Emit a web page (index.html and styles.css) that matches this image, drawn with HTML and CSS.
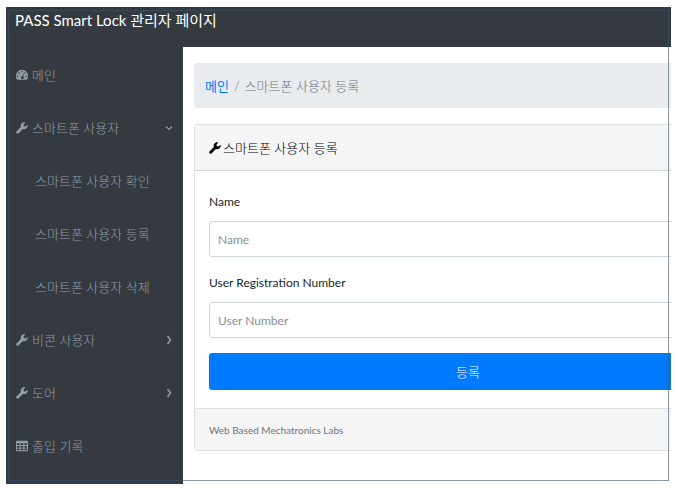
FILE: index.html
```html
<!DOCTYPE html>
<html lang="ko">
<head>
  <meta charset="UTF-8">
  <meta name="viewport" content="width=device-width, initial-scale=1.0">
  <title>PASS Smart Lock 관리자 페이지</title>
  <link rel="stylesheet" href="styles.css">
</head>
<body>

  <!-- shared icon shapes -->
  <svg class="sprite" aria-hidden="true">
    <symbol id="icon-wrench" viewBox="0 0 16 16">
      <path fill="currentColor" d="M15.3 3.6 12.8 6 10.5 5.5 10 3.2 12.4.7C10.300.1 8.100.8 6.900 2.600c-.8 1.200-.9 2.700-.4 4L.9 12.200a1.800 1.800 0 0 0 0 2.700 1.800 1.800 0 0 0 2.700 0l5.600-5.600c1.500.6 3.300.4 4.600-.7 1.600-1.200 2.100-3.200 1.500-5z"/>
    </symbol>
    <symbol id="icon-dashboard" viewBox="0 0 16 16">
      <path fill="currentColor" fill-rule="evenodd" d="M8 1a8 8 0 0 0-8 8c0 1.900.4 3.600 1.200 5.100.1.200.3.300.5.300h12.600c.2 0 .4-.1.500-.3A11 11 0 0 0 16 9a8 8 0 0 0-8-8zM8 2.500a1.100 1.100 0 1 1 0 2.200 1.100 1.100 0 0 1 0-2.200zM4 4.200a1.100 1.100 0 1 1 0 2.200 1.100 1.100 0 0 1 0-2.200zM2.400 8.500a1.100 1.100 0 1 1 0 2.200 1.100 1.100 0 0 1 0-2.200zM13.600 8.500a1.100 1.100 0 1 1 0 2.200 1.100 1.100 0 0 1 0-2.200zM12 4.200a1.100 1.100 0 1 1 0 2.200 1.100 1.100 0 0 1 0-2.200zM9.600 6l.9.300-1 3.800a1.800 1.800 0 1 1-1-.3z"/>
    </symbol>
    <symbol id="icon-table" viewBox="0 0 16 16">
      <path fill="currentColor" fill-rule="evenodd" d="M1.500 1h13A1.500 1.500 0 0 1 16 2.500v11a1.500 1.500 0 0 1-1.500 1.500h-13A1.500 1.500 0 0 1 0 13.500v-11A1.500 1.500 0 0 1 1.500 1zM1.300 4.200v2.500h3.500V4.200zM6.200 4.200v2.500h3.600V4.200zM11.200 4.200v2.500h3.500V4.200zM1.300 7.900v2.300h3.500V7.900zM6.200 7.900v2.300h3.600V7.900zM11.200 7.900v2.300h3.500V7.900zM1.300 11.400v2.300h3.500v-2.300zM6.200 11.400v2.300h3.600v-2.300zM11.200 11.400v2.300h3.500v-2.300z"/>
    </symbol>
    <symbol id="icon-right" viewBox="0 0 8 10">
      <path fill="none" stroke="currentColor" stroke-width="1.500" d="M2.500 1 5.500 5 2.500 9"/>
    </symbol>
    <symbol id="icon-down" viewBox="0 0 8 10">
      <path fill="none" stroke="currentColor" stroke-width="1.200" d="M1 3.500 4 6.500 7 3.500"/>
    </symbol>
  </svg>

  <div class="page">
    <header class="top-bar">
      <a class="brand" href="#">PASS Smart Lock 관리자 페이지</a>
    </header>

    <div class="layout">
      <nav class="sidebar">
        <a class="nav-link" href="#"><svg class="icon"><use href="#icon-dashboard"/></svg>메인</a>
        <a class="nav-link" href="#"><svg class="icon"><use href="#icon-wrench"/></svg>스마트폰 사용자<svg class="arrow"><use href="#icon-down"/></svg></a>
        <a class="nav-link sub-link" href="#">스마트폰 사용자 확인</a>
        <a class="nav-link sub-link" href="#">스마트폰 사용자 등록</a>
        <a class="nav-link sub-link" href="#">스마트폰 사용자 삭제</a>
        <a class="nav-link" href="#"><svg class="icon"><use href="#icon-wrench"/></svg>비콘 사용자<svg class="arrow"><use href="#icon-right"/></svg></a>
        <a class="nav-link" href="#"><svg class="icon"><use href="#icon-wrench"/></svg>도어<svg class="arrow"><use href="#icon-right"/></svg></a>
        <a class="nav-link" href="#"><svg class="icon"><use href="#icon-table"/></svg>출입 기록</a>
      </nav>

      <main class="content">
        <div class="breadcrumb">
          <a href="#">메인</a>
          <span>/</span>
          <span>스마트폰 사용자 등록</span>
        </div>

        <section class="card">
          <div class="card-header"><svg class="icon"><use href="#icon-wrench"/></svg>스마트폰 사용자 등록</div>
          <form class="card-body">
            <label for="name">Name</label>
            <input type="text" id="name" placeholder="Name">
            <label for="user-number">User Registration Number</label>
            <input type="text" id="user-number" placeholder="User Number">
            <button type="button" class="submit-btn">등록</button>
          </form>
          <div class="card-footer">Web Based Mechatronics Labs</div>
        </section>
      </main>
    </div>

    <div class="frame"></div>
  </div>

</body>
</html>
```
FILE: styles.css
```css
* {
  box-sizing: border-box;
}

body {
  margin: 0;
  padding: 7px 7px 5px 6px;
  min-height: 100vh;
  display: flex;
  background-color: #fff;
  color: #212529;
  font-family: Lato, "Noto Sans CJK KR", sans-serif;
  font-size: 13px;
  font-weight: 300;
  line-height: 20px;
}

a {
  text-decoration: none;
}

.sprite {
  display: none;
}

.page {
  position: relative;
  flex: 1;
  min-width: 0;
  display: flex;
  flex-direction: column;
  overflow: hidden;
}

/* HEADER */
.top-bar {
  height: 40px;
  padding: 1px 9px;
  background-color: #343a40;
}

.brand {
  color: #fff;
  font-size: 15px;
  font-weight: 400;
  line-height: 24px;
}

.layout {
  flex: 1;
  display: flex;
}

/* SIDEBAR */
.sidebar {
  flex: 0 0 177px;
  padding-top: 1px;
  background-color: #343a40;
}

.nav-link {
  display: flex;
  align-items: center;
  height: 53px;
  padding: 0 10px;
  color: #959da4;
}

.sub-link {
  padding-left: 29px;
}

.icon {
  width: 12px;
  height: 12px;
  margin-right: 4px;
}

.arrow {
  width: 8px;
  height: 10px;
  margin-left: auto;
}

/* CONTENT, runs past the right edge of the page */
.content {
  flex: 1;
  min-width: 0;
  margin-right: -71px;
  padding: 16px 0 0 11px;
}

.breadcrumb {
  display: flex;
  align-items: center;
  gap: 5px;
  height: 45px;
  margin-bottom: 16px;
  padding: 0 11px;
  border-radius: 3px;
  background-color: #e9ecef;
  color: #6c757d;
}

.breadcrumb a {
  color: #007bff;
  font-weight: 400;
}

.card {
  border: 1px solid #dfdfdf;
  border-radius: 3px;
}

.card-header {
  display: flex;
  align-items: center;
  height: 46px;
  padding: 0 14px;
  border-bottom: 1px solid #d6d6d6;
  background-color: #f5f5f5;
  color: #000;
}

.card-header .icon {
  margin-right: 2px;
}

.card-body {
  display: flex;
  flex-direction: column;
  padding: 20px 14px 18px;
}

.card-body label {
  margin-bottom: 8px;
  font-size: 12px;
  font-weight: 400;
  line-height: 22px;
}

.card-body input {
  height: 36px;
  margin-bottom: 15px;
  padding: 0 8px;
  border: 1px solid #ced4da;
  border-radius: 3px;
  background-color: #fff;
  color: #495057;
  font: inherit;
  font-size: 12px;
  font-weight: 400;
}

.card-body input::placeholder {
  color: #868e96;
}

.submit-btn {
  height: 37px;
  border: none;
  border-radius: 3px;
  background-color: #007bff;
  color: #fff;
  font: inherit;
}

.card-footer {
  height: 42px;
  padding: 0 14px;
  border-top: 1px solid #dfdfdf;
  background-color: #f5f5f5;
  color: #6c757d;
  font-size: 10px;
  font-weight: 400;
  line-height: 42px;
}

/* thin outline drawn over everything */
.frame {
  position: absolute;
  top: 3px;
  right: 2px;
  bottom: 3px;
  left: 2px;
  border: 1px solid #3b5570;
  opacity: 0.6;
  pointer-events: none;
}
```
